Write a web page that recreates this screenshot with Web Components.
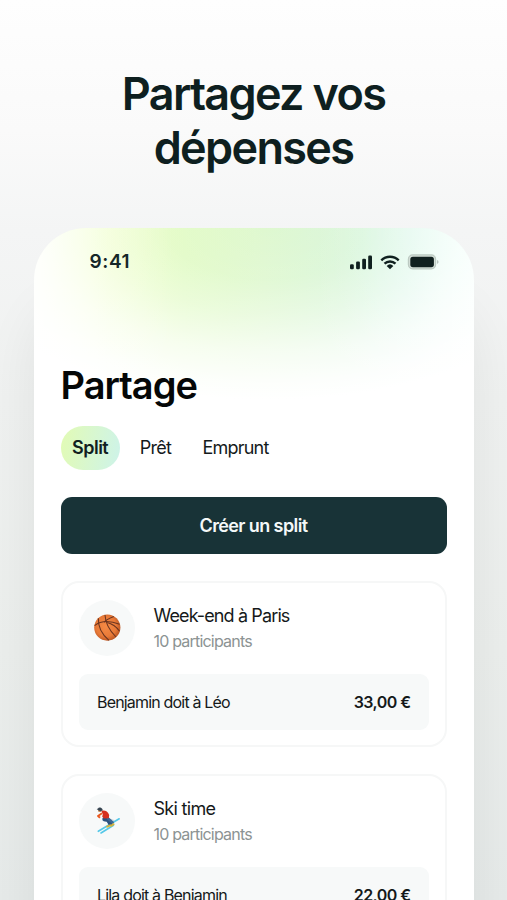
<!DOCTYPE html>
<html lang="fr">
<head>
<meta charset="utf-8">
<title>Partage</title>
<style>
html,body{margin:0;height:100%;overflow:hidden}
body{font-family:Inter,"Liberation Sans",sans-serif;color:#0e1f20}
</style>
</head>
<body>
<promo-page>
  <span slot="line1">Partagez vos</span>
  <span slot="line2">dépenses</span>
  <phone-frame>
    <status-bar></status-bar>
    <page-title>Partage</page-title>
    <tab-bar>
      <tab-item active style="--ls:-.5px">Split</tab-item>
      <tab-item style="--ls:-.75px">Prêt</tab-item>
      <tab-item style="--ls:-.8px">Emprunt</tab-item>
    </tab-bar>
    <main-button>Créer un split</main-button>
    <split-card>
      <ball-icon slot="icon"></ball-icon>
      <span slot="name">Week-end à Paris</span>
      <span slot="sub">10 participants</span>
      <span slot="debt">Benjamin doit à Léo</span>
      <span slot="amount">33,00 €</span>
    </split-card>
    <split-card>
      <skier-icon slot="icon"></skier-icon>
      <span slot="name">Ski time</span>
      <span slot="sub">10 participants</span>
      <span slot="debt">Lila doit à Benjamin</span>
      <span slot="amount">22,00 €</span>
    </split-card>
  </phone-frame>
</promo-page>
<script>
const define = (name, html) => customElements.define(name, class extends HTMLElement {
  constructor() {
    super();
    const t = document.createElement('template');
    t.innerHTML = html;
    this.attachShadow({mode: 'open'}).append(t.content.cloneNode(true));
  }
});

define('promo-page', `<style>
:host{display:flex;flex-direction:column;align-items:center;box-sizing:border-box;width:507px;height:900px;padding-top:67px;overflow:hidden;
background:linear-gradient(#fefefe 0,#fafafa 130px,#f4f5f5 230px,#eff1f0 400px,#ebeeec 650px,#e6eae9 900px)}
h1{margin:0 0 53px;font-size:45px;line-height:54px;font-weight:600;letter-spacing:-1.68px;text-align:center;display:flex;flex-direction:column}
</style><h1><slot name="line1"></slot><slot name="line2"></slot></h1><slot></slot>`);

define('phone-frame', `<style>
:host{display:flex;flex-direction:column;box-sizing:border-box;width:440px;height:760px;flex:none;padding:0 27px;border-radius:52px 52px 0 0;
background:
linear-gradient(90deg,rgba(255,255,255,.85) 0,rgba(255,255,255,.55) 30px,rgba(255,255,255,.22) 75px,rgba(255,255,255,0) 140px,rgba(255,255,255,0) 280px,rgba(255,255,255,.1) 330px,rgba(255,255,255,.35) 385px,rgba(255,255,255,.6) 440px),
radial-gradient(ellipse 330px 172px at 235px 0,rgba(255,255,255,0) 0,rgba(255,255,255,.1) 30%,rgba(255,255,255,.36) 50%,rgba(255,255,255,.72) 72%,rgba(255,255,255,.93) 90%,#fff 100%),
linear-gradient(90deg,#edffc0 60px,#e1fbc5 150px,#dff8d0 230px,#d9f6d8 310px,#d5f6e6 380px,#e0fff4 440px);
box-shadow:0 75px 55px rgba(20,35,30,.065)}
</style><slot></slot>`);

define('status-bar', `<style>
:host{display:flex;align-items:center;justify-content:space-between;height:67px;padding:0 8px 0 29px;color:#152728}
b{font-size:19px;font-weight:600;letter-spacing:.6px}
svg{display:block}
</style><b>9:41</b>
<svg width="90" height="18" viewBox="0 0 90 18">
<g fill="#10201f"><rect x="1" y="11.3" width="3.8" height="5" rx="1.2"/><rect x="7.1" y="8.5" width="3.8" height="7.8" rx="1.2"/><rect x="13.2" y="5.7" width="3.8" height="10.6" rx="1.2"/><rect x="19.2" y="2.5" width="3.8" height="13.8" rx="1.2"/>
<path d="M41 16.2l-3.3-3.3a4.8 4.8 0 0 1 6.6 0z"/></g>
<g fill="none" stroke="#10201f" stroke-width="2.4"><path d="M32.3 7.3a12.5 12.5 0 0 1 17.4 0"/><path d="M35.5 10.7a8 8 0 0 1 11 0"/></g>
<rect x="59.4" y="1.9" width="27.2" height="14" rx="4.3" fill="#d3ded7" stroke="#bccac2" stroke-width="1.2"/>
<rect x="61.3" y="3.8" width="23.6" height="10.4" rx="2.6" fill="#10201f"/>
<path d="M88 7.1q1.6.6 1.6 1.9T88 10.9z" fill="#b9c5bf"/>
</svg>`);

define('page-title', `<style>
:host{display:block;margin-top:66px;font-size:38px;line-height:48px;font-weight:600;letter-spacing:-1px;color:#050707}
</style><slot></slot>`);

define('tab-bar', `<style>
:host{display:flex;gap:8.5px;margin-top:17px;height:44px}
</style><slot></slot>`);

define('tab-item', `<style>
:host{display:flex;align-items:center;justify-content:center;box-sizing:border-box;height:44px;padding:0 11.5px 1px;border-radius:22px;font-size:18px;letter-spacing:var(--ls);color:#141a1b}
:host([active]){font-weight:600;color:#10201f;background:linear-gradient(100deg,#e2fbb4,#d8f7cf 50%,#cdf3ea)}
</style><slot></slot>`);

define('main-button', `<style>
:host{display:flex;flex:none;align-items:center;justify-content:center;height:57px;margin-top:27px;border-radius:11px;background:#183337;color:#f4f8f8;font-size:18px;font-weight:600;letter-spacing:-.6px}
</style><slot></slot>`);

define('split-card', `<style>
:host{display:block;flex:none;box-sizing:border-box;height:166px;margin-top:27px;border:2px solid #f6f7f7;border-radius:18px;padding:17px 16px;background:#fff}
.top{display:flex;align-items:center;gap:19px;height:56px}
.ic{display:flex;align-items:center;justify-content:center;width:56px;height:56px;border-radius:50%;background:#f7f9f9}
.name{padding-top:1px;font-size:18px;line-height:26px;letter-spacing:-.88px;color:#15191a}
:host(:last-child) .name{letter-spacing:-.7px}
.sub{font-size:16px;line-height:25px;padding-bottom:1px;letter-spacing:-.8px;color:#8c9393}
.row{display:flex;align-items:center;justify-content:space-between;box-sizing:border-box;height:56px;margin-top:18px;padding:0 18px 0 18.5px;border-radius:9px;background:#f7f9f9;font-size:16px;letter-spacing:-.82px;color:#15191a}
.amt{font-weight:600;letter-spacing:-.55px}
</style>
<div class="top"><div class="ic"><slot name="icon"></slot></div><div><div class="name"><slot name="name"></slot></div><div class="sub"><slot name="sub"></slot></div></div></div>
<div class="row"><slot name="debt"></slot><div class="amt"><slot name="amount"></slot></div></div>`);

define('ball-icon', `<style>:host{display:block}svg{display:block}</style>
<svg width="28" height="28" viewBox="0 0 28 28">
<defs><radialGradient id="g" cx=".45" cy=".45" r=".6"><stop offset="0" stop-color="#f58a45"/><stop offset=".65" stop-color="#e87a38"/><stop offset="1" stop-color="#b3501f"/></radialGradient></defs>
<circle cx="14.3" cy="13.6" r="13.1" fill="url(#g)"/>
<g fill="none" stroke="#6b3420" stroke-width="1.05"><path d="M1.6 11.6C7.5 7 17 6.6 26.6 10.2"/><path d="M12 1C12.4 9.2 17 17 23 23"/><path d="M5.4 4.2C4.9 12 8.5 20 16 26.4"/><path d="M20.8 2.5C16.2 4.3 12.3 6 11.4 8.4"/><path d="M14.2 8.6c5.2 1.2 9.3 4.5 12.4 8.6"/></g></svg>`);

define('skier-icon', `<style>:host{display:block}svg{display:block}</style>
<svg width="28" height="28" viewBox="0 0 28 28">
<g fill="none" stroke-linecap="round"><path d="M5.3 24.3L26.2 11.8M8 26L20.5 18.2" stroke="#55c8e8" stroke-width="1.6"/>
<path d="M10 10L21 13.5" stroke="#aebcc4" stroke-width=".7"/>
<path d="M11.2 12.3L15 13.2 17.3 17" stroke="#2c5280" stroke-width="3.8" stroke-linejoin="round"/>
<path d="M15 11.5L19.6 15.4" stroke="#3b6795" stroke-width="2.6"/>
<path d="M14.2 19.6l3-1.3M18.4 18.6l2.2-1.4" stroke="#d5b23a" stroke-width="2"/></g>
<path d="M8.3 3.8Q14 2.6 16.2 8l-.4 3.2-4.8.4-1.8-2.2.6-2z" fill="#d62f1e"/>
<path d="M9 6.2L5 9l2 1.8" fill="none" stroke="#e9571d" stroke-width="1.9" stroke-linejoin="round"/>
<circle cx="6.6" cy="3.4" r="1.6" fill="#c98b5c"/><path d="M4.4 2.4a2.6 2.6 0 0 1 5 .8L7.6 4z" fill="#34434f" stroke="#34434f" stroke-width=".6"/>
</svg>`);
</script>
</body>
</html>
